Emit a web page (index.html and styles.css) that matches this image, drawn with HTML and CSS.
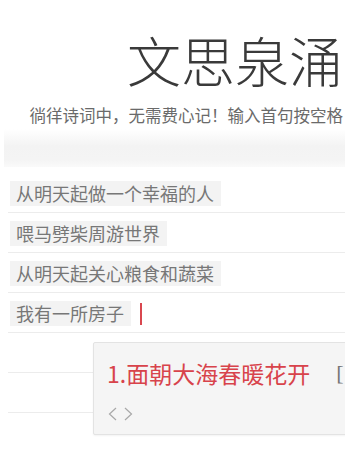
FILE: index.html
```html
<!DOCTYPE html>
<html lang="zh">
<head>
<meta charset="utf-8">
<link rel="stylesheet" href="styles.css">
</head>
<body>
<div class="page">
  <header class="head">
    <h1 class="title">文思泉涌</h1>
    <p class="sub">徜徉诗词中，无需费心记！输入首句按空格</p>
  </header>
  <div class="band"></div>
  <ul class="lines">
    <li class="row"><span class="verse">从明天起做一个幸福的人</span></li>
    <li class="row"><span class="verse">喂马劈柴周游世界</span></li>
    <li class="row"><span class="verse">从明天起关心粮食和蔬菜</span></li>
    <li class="row"><span class="verse">我有一所房子</span><span class="caret"></span></li>
    <li class="row"></li>
    <li class="row"></li>
  </ul>
  <div class="popup">
    <div class="cand"><span class="pick">1.面朝大海春暖花开</span><span class="bracket">[</span></div>
    <div class="nav">
      <svg width="9" height="14" viewBox="0 0 9 14"><path d="M8 1 L1.5 7 L8 13" fill="none" stroke="#a8a8a8" stroke-width="1.2"/></svg>
      <svg width="9" height="14" viewBox="0 0 9 14"><path d="M1 1 L7.5 7 L1 13" fill="none" stroke="#a8a8a8" stroke-width="1.2"/></svg>
    </div>
  </div>
</div>
</body>
</html>
```
FILE: styles.css
```css
html, body {
  margin: 0;
  padding: 0;
  background: #fff;
}
body {
  font-family: "Noto Sans CJK SC", "Noto Sans", sans-serif;
  width: 345px;
  height: 475px;
  overflow: hidden;
}
.page {
  position: relative;
  height: 475px;
  overflow: hidden;
}
.head {
  display: flex;
  flex-direction: column;
  align-items: flex-end;
  padding-top: 28px;
  padding-right: 2px;
}
.title {
  margin: 0;
  font-family: "Noto Sans CJK SC Light", "Noto Sans CJK SC DemiLight", "Noto Sans CJK SC", sans-serif;
  font-size: 54px;
  font-weight: 300;
  line-height: 64px;
  color: #3a3a3a;
  white-space: nowrap;
}
.sub {
  margin: 13px 0 0;
  font-size: 16.5px;
  line-height: 20px;
  color: #6a6a6a;
  white-space: nowrap;
}
.band {
  margin: 4px 0 0 4px;
  height: 38px;
  background: linear-gradient(to bottom, #ffffff 0%, #f3f3f3 45%, #f4f4f4 80%, #fafafa 100%);
}
.lines {
  list-style: none;
  margin: 6px 0 0 8px;
  padding: 0;
}
.row {
  display: flex;
  align-items: flex-end;
  height: 33px;
  padding: 0 0 6px 2px;
  border-bottom: 1px solid #ececec;
  box-sizing: content-box;
}
.verse {
  background: #f3f3f3;
  color: #777;
  font-size: 18px;
  line-height: 25px;
  padding: 0 7px 0 6px;
  white-space: nowrap;
}
.caret {
  width: 1.5px;
  height: 22px;
  margin-bottom: 1px;
  background: #d9474f;
  margin-left: 9px;
}
.popup {
  position: absolute;
  left: 93px;
  top: 342px;
  width: 270px;
  height: 93px;
  background: #f5f5f5;
  border: 1px solid #e3e3e3;
  border-radius: 2px;
  box-shadow: 0 1px 2px rgba(0,0,0,0.05);
  padding: 15px 0 0 13px;
  box-sizing: border-box;
}
.cand {
  display: flex;
  align-items: center;
  white-space: nowrap;
  line-height: 30px;
}
.pick {
  color: #d8434b;
  font-size: 23px;
}
.bracket {
  margin-left: 26px;
  font-family: "Liberation Serif", "DejaVu Serif", serif;
  font-size: 22px;
  color: #777;
}
.nav {
  display: flex;
  gap: 7px;
  margin-top: 19px;
  padding-left: 1px;
}
```
